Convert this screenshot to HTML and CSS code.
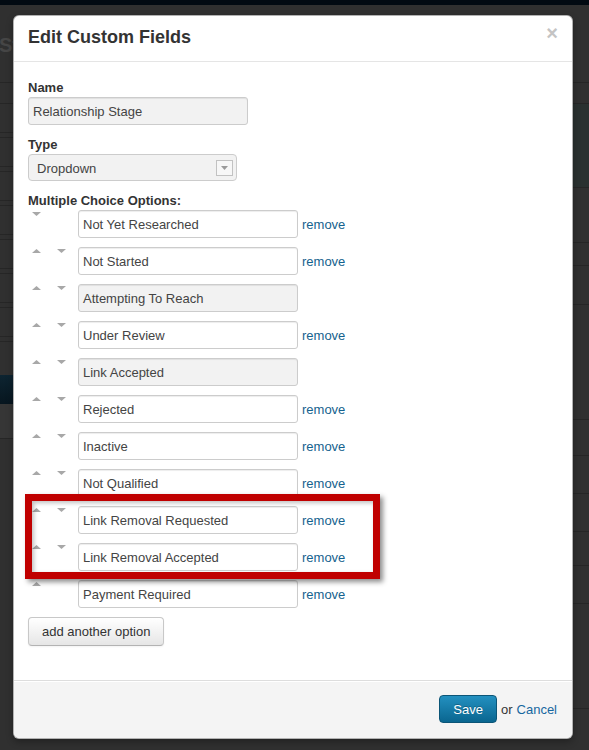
FILE: index.html
```html
<!DOCTYPE html>
<html>
<head>
<meta charset="utf-8">
<title>Edit Custom Fields</title>
<link rel="stylesheet" href="styles.css">
</head>
<body>
<div class="topbar"></div>
<div class="page">
  <div class="col-left">
    <div class="bg-row bg-head"><span class="bg-title">St</span></div>
    <div class="bg-row h20"></div>
    <div class="bg-row h28"></div><div class="bg-row h4"></div>
    <div class="bg-row h28"></div><div class="bg-row h4"></div>
    <div class="bg-row h28"></div><div class="bg-row h4"></div>
    <div class="bg-row h28"></div><div class="bg-row h4"></div>
    <div class="bg-row h28"></div><div class="bg-row h4"></div>
    <div class="bg-row h28"></div><div class="bg-row h4"></div>
    <div class="bg-row h28"></div><div class="bg-row h4"></div>
    <div class="bg-gap33"></div>
    <div class="bg-navy"></div>
    <div class="bg-row bg-light"></div>
  </div>
  <div class="col-right">
    <div class="bg-row bg-head"></div>
    <div class="bg-row h20"></div>
    <div class="bg-teal"></div>
    <div class="bg-row h54"></div>
    <div class="bg-row h22"></div>
    <div class="bg-row h38"></div>
    <div class="bg-row h114"></div>
    <div class="bg-row h35"></div>
    <div class="bg-row h37"></div>
    <div class="bg-row h37"></div>
    <div class="bg-row h33"></div>
    <div class="bg-row h37"></div>
    <div class="bg-row h104"></div>
  </div>
</div>

<div class="modal">
  <div class="modal-header">
    <h3 class="modal-title">Edit Custom Fields</h3>
    <span class="close">&times;</span>
  </div>
  <div class="modal-body">
    <div class="field">
      <div class="lbl">Name</div>
      <div class="input input-ro input-name">Relationship Stage</div>
    </div>
    <div class="field">
      <div class="lbl">Type</div>
      <div class="select">
        <span class="select-text">Dropdown</span>
        <span class="select-btn"><svg width="7" height="4" viewBox="0 0 7 4"><path d="M0 0H7L3.5 4Z" fill="#9a9a9a"/></svg></span>
      </div>
    </div>
    <div class="lbl">Multiple Choice Options:</div>
    <div class="options">
      <div class="opt">
        <div class="arrows"><svg class="arr" width="9" height="4" viewBox="0 0 9 4"><path d="M0 0H9L4.5 4Z"/></svg></div>
        <div class="input">Not Yet Researched</div><a class="remove">remove</a>
      </div>
      <div class="opt">
        <div class="arrows"><svg class="arr" width="9" height="4" viewBox="0 0 9 4"><path d="M0 4H9L4.5 0Z"/></svg><svg class="arr" width="9" height="4" viewBox="0 0 9 4"><path d="M0 0H9L4.5 4Z"/></svg></div>
        <div class="input">Not Started</div><a class="remove">remove</a>
      </div>
      <div class="opt">
        <div class="arrows"><svg class="arr" width="9" height="4" viewBox="0 0 9 4"><path d="M0 4H9L4.5 0Z"/></svg><svg class="arr" width="9" height="4" viewBox="0 0 9 4"><path d="M0 0H9L4.5 4Z"/></svg></div>
        <div class="input input-ro">Attempting To Reach</div>
      </div>
      <div class="opt">
        <div class="arrows"><svg class="arr" width="9" height="4" viewBox="0 0 9 4"><path d="M0 4H9L4.5 0Z"/></svg><svg class="arr" width="9" height="4" viewBox="0 0 9 4"><path d="M0 0H9L4.5 4Z"/></svg></div>
        <div class="input">Under Review</div><a class="remove">remove</a>
      </div>
      <div class="opt">
        <div class="arrows"><svg class="arr" width="9" height="4" viewBox="0 0 9 4"><path d="M0 4H9L4.5 0Z"/></svg><svg class="arr" width="9" height="4" viewBox="0 0 9 4"><path d="M0 0H9L4.5 4Z"/></svg></div>
        <div class="input input-ro">Link Accepted</div>
      </div>
      <div class="opt">
        <div class="arrows"><svg class="arr" width="9" height="4" viewBox="0 0 9 4"><path d="M0 4H9L4.5 0Z"/></svg><svg class="arr" width="9" height="4" viewBox="0 0 9 4"><path d="M0 0H9L4.5 4Z"/></svg></div>
        <div class="input">Rejected</div><a class="remove">remove</a>
      </div>
      <div class="opt">
        <div class="arrows"><svg class="arr" width="9" height="4" viewBox="0 0 9 4"><path d="M0 4H9L4.5 0Z"/></svg><svg class="arr" width="9" height="4" viewBox="0 0 9 4"><path d="M0 0H9L4.5 4Z"/></svg></div>
        <div class="input">Inactive</div><a class="remove">remove</a>
      </div>
      <div class="opt">
        <div class="arrows"><svg class="arr" width="9" height="4" viewBox="0 0 9 4"><path d="M0 4H9L4.5 0Z"/></svg><svg class="arr" width="9" height="4" viewBox="0 0 9 4"><path d="M0 0H9L4.5 4Z"/></svg></div>
        <div class="input">Not Qualified</div><a class="remove">remove</a>
      </div>
      <div class="opt">
        <div class="arrows"><svg class="arr" width="9" height="4" viewBox="0 0 9 4"><path d="M0 4H9L4.5 0Z"/></svg><svg class="arr" width="9" height="4" viewBox="0 0 9 4"><path d="M0 0H9L4.5 4Z"/></svg></div>
        <div class="input">Link Removal Requested</div><a class="remove">remove</a>
      </div>
      <div class="opt">
        <div class="arrows"><svg class="arr" width="9" height="4" viewBox="0 0 9 4"><path d="M0 4H9L4.5 0Z"/></svg><svg class="arr" width="9" height="4" viewBox="0 0 9 4"><path d="M0 0H9L4.5 4Z"/></svg></div>
        <div class="input">Link Removal Accepted</div><a class="remove">remove</a>
      </div>
      <div class="opt">
        <div class="arrows"><svg class="arr" width="9" height="4" viewBox="0 0 9 4"><path d="M0 4H9L4.5 0Z"/></svg></div>
        <div class="input">Payment Required</div><a class="remove">remove</a>
      </div>
    </div>
    <button class="btn">add another option</button>
  </div>
  <div class="modal-footer">
    <button class="btn-primary">Save</button>
    <span class="or">or</span>
    <a class="cancel">Cancel</a>
  </div>
</div>

<div class="highlight"></div>
</body>
</html>
```

FILE: styles.css
```css
* { box-sizing: border-box; }

body {
  margin: 0;
  width: 589px;
  height: 750px;
  overflow: hidden;
  position: relative;
  background: #303030;
  font-family: "Liberation Sans", Arial, sans-serif;
  font-size: 13px;
  color: #333;
}

/* ---------- dimmed page behind the dialog ---------- */
.topbar { height: 5px; background: #020a12; }

.page {
  display: grid;
  grid-template-columns: 300px 1fr;
}

.col-left, .col-right { display: flex; flex-direction: column; }

.bg-row { border-bottom: 1px solid #262626; }
.bg-head { height: 78px; padding-top: 28px; }
.bg-title {
  display: block;
  font-weight: bold;
  font-size: 20px;
  line-height: 24px;
  color: #464646;
  margin-left: -1px;
}
.h4 { height: 5px; }
.h20 { height: 21px; }
.h22 { height: 23px; }
.h28 { height: 29px; }
.h33 { height: 34px; }
.h35 { height: 36px; }
.h37 { height: 38px; }
.h38 { height: 39px; }
.h54 { height: 55px; }
.h104 { height: 105px; }
.h114 { height: 115px; }
.bg-gap33 { height: 33px; }
.bg-navy {
  height: 29px;
  background: linear-gradient(#0d2431, #07161f);
}
.bg-light { height: 35px; background: #363636; }
.bg-teal { height: 84px; background: #2a3130; border-bottom: 1px solid #262626; }

/* ---------- modal ---------- */
.modal {
  position: absolute;
  left: 13px;
  top: 15px;
  width: 560px;
  height: 724px;
  background: #fff;
  border: 1px solid rgba(0, 0, 0, 0.3);
  border-radius: 6px;
  box-shadow: 0 3px 7px rgba(0, 0, 0, 0.3);
  display: flex;
  flex-direction: column;
}

.modal-header {
  display: flex;
  justify-content: space-between;
  align-items: flex-start;
  padding: 11px 14px 13px 14px;
  border-bottom: 1px solid #e5e5e5;
}

.modal-title {
  margin: 0;
  font-size: 18px;
  line-height: 21px;
  font-weight: bold;
  color: #333;
}

.close {
  font-size: 20px;
  font-weight: bold;
  line-height: 20px;
  color: #c4c4c4;
  margin-top: -4px;
}

.modal-body {
  flex: 1;
  padding: 16px 14px 0 14px;
}

.field { margin-bottom: 10px; }

.lbl {
  font-weight: bold;
  font-size: 13px;
  line-height: 19px;
  color: #333;
}

.input {
  width: 220px;
  height: 28px;
  padding: 1px 4px 0 4px;
  border: 1px solid #cccccc;
  border-radius: 3px;
  background: #fff;
  box-shadow: inset 0 1px 1px rgba(0, 0, 0, 0.075);
  font-size: 13px;
  line-height: 25px;
  color: #444;
  white-space: nowrap;
}

.input-ro { background: #f2f2f2; }

.select {
  width: 209px;
  height: 27px;
  display: flex;
  align-items: center;
  justify-content: space-between;
  padding: 0 3px 0 8px;
  border: 1px solid #cccccc;
  border-radius: 4px;
  background: #f2f2f2;
  color: #444;
  font-size: 13px;
}

.select-text { padding-top: 2px; }

.select-btn {
  width: 17px;
  height: 16px;
  border: 1px solid #c2c2c2;
  background: #f7f7f7;
  display: flex;
  align-items: center;
  justify-content: center;
}

.options { display: flex; flex-direction: column; gap: 9px; }

.opt {
  display: flex;
  align-items: center;
  height: 28px;
}

.arrows {
  align-self: flex-start;
  width: 50px;
  display: flex;
  gap: 16px;
  padding: 2px 0 0 4px;
}

.arr { display: block; fill: #a8a8a8; }

.remove {
  margin-left: 4px;
  padding-top: 1px;
  color: #15628e;
  font-size: 13px;
  line-height: 18px;
}

.btn {
  margin-top: 9px;
  height: 29px;
  padding: 0 13px;
  font-family: "Liberation Sans", Arial, sans-serif;
  font-size: 13px;
  color: #333;
  background: linear-gradient(#ffffff, #e6e6e6);
  border: 1px solid #c8c8c8;
  border-bottom-color: #b3b3b3;
  border-radius: 4px;
  box-shadow: inset 0 1px 0 rgba(255, 255, 255, 0.2), 0 1px 2px rgba(0, 0, 0, 0.05);
}

.modal-footer {
  display: flex;
  justify-content: flex-end;
  align-items: center;
  gap: 4px;
  height: 58px;
  padding: 14px 15px 15px 14px;
  background: #f4f4f4;
  border-top: 1px solid #dddddd;
  border-radius: 0 0 6px 6px;
  box-shadow: inset 0 1px 0 #ffffff;
  font-size: 13px;
}

.btn-primary {
  height: 28px;
  padding: 0 13px;
  font-family: "Liberation Sans", Arial, sans-serif;
  font-size: 13px;
  color: #fff;
  background: linear-gradient(#2390c0, #0a6690);
  border: 1px solid #0b5577;
  border-radius: 4px;
  text-shadow: 0 -1px 0 rgba(0, 0, 0, 0.25);
}

.or { color: #333; }
.cancel { color: #1667a0; }

/* ---------- red annotation box ---------- */
.highlight {
  position: absolute;
  left: 25px;
  top: 494px;
  width: 355px;
  height: 85px;
  border: 7px solid #c00000;
  box-shadow: 3px 3px 5px rgba(0, 0, 0, 0.45), inset 2px 2px 4px rgba(0, 0, 0, 0.25);
}
```
